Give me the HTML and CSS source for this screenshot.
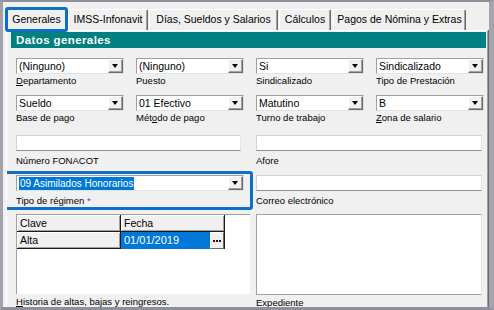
FILE: index.html
```html
<!DOCTYPE html>
<html lang="es">
<head>
<meta charset="utf-8">
<title>Datos generales</title>
<link rel="stylesheet" href="styles.css">
</head>
<body>
<div class="frame">
  <div class="tabs">
    <div class="tab tab-generales active">Generales<span class="ring ring-tab"></span></div>
    <div class="tab tab-imss">IMSS-Infonavit</div>
    <div class="tab tab-dias">Días, Sueldos y Salarios</div>
    <div class="tab tab-calculos">Cálculos</div>
    <div class="tab tab-pagos">Pagos de Nómina y Extras</div>
  </div>
  <div class="panel">
    <div class="section-title">Datos generales</div>

    <div class="combo-grid">
      <div class="field">
        <div class="combo"><span class="value">(Ninguno)</span><span class="btn"><i class="arrow"></i></span></div>
        <div class="label"><u>D</u>epartamento</div>
      </div>
      <div class="field">
        <div class="combo"><span class="value">(Ninguno)</span><span class="btn"><i class="arrow"></i></span></div>
        <div class="label">Puesto</div>
      </div>
      <div class="field">
        <div class="combo"><span class="value">Si</span><span class="btn"><i class="arrow"></i></span></div>
        <div class="label">Sindicalizado</div>
      </div>
      <div class="field">
        <div class="combo"><span class="value">Sindicalizado</span><span class="btn"><i class="arrow"></i></span></div>
        <div class="label">Tipo de Prestación</div>
      </div>
      <div class="field">
        <div class="combo"><span class="value">Sueldo</span><span class="btn"><i class="arrow"></i></span></div>
        <div class="label">Base de pago</div>
      </div>
      <div class="field">
        <div class="combo"><span class="value">01 Efectivo</span><span class="btn"><i class="arrow"></i></span></div>
        <div class="label">Mét<u>o</u>do de pago</div>
      </div>
      <div class="field">
        <div class="combo"><span class="value">Matutino</span><span class="btn"><i class="arrow"></i></span></div>
        <div class="label">Turno de trabajo</div>
      </div>
      <div class="field">
        <div class="combo"><span class="value">B</span><span class="btn"><i class="arrow"></i></span></div>
        <div class="label"><u>Z</u>ona de salario</div>
      </div>
    </div>

    <div class="pair row-text">
      <div class="field">
        <div class="edit edit-left"></div>
        <div class="label gap">Número FONACOT</div>
      </div>
      <div class="field">
        <div class="edit"></div>
        <div class="label gap">Afore</div>
      </div>
    </div>

    <div class="pair row-regimen">
      <div class="field highlighted">
        <div class="combo"><span class="value"><span class="selected">09 Asimilados Honorarios</span></span><span class="btn"><i class="arrow"></i></span></div>
        <div class="label gap">Tipo de régimen <span class="req">*</span></div>
        <span class="ring ring-field"></span>
      </div>
      <div class="field">
        <div class="edit"></div>
        <div class="label gap">Correo electrónico</div>
      </div>
    </div>

    <div class="pair row-bottom">
      <div class="field">
        <div class="sgrid">
          <div class="cell fixed">Clave</div>
          <div class="cell fixed">Fecha</div>
          <div class="cell fixed">Alta</div>
          <div class="cell data">01/01/2019<span class="ellipsis"><svg width="8" height="2" viewBox="0 0 8 2"><rect x="0" y="0" width="2" height="2"/><rect x="3" y="0" width="2" height="2"/><rect x="6" y="0" width="2" height="2"/></svg></span></div>
        </div>
        <div class="label small-gap"><u>H</u>istoria de altas, bajas y reingresos.</div>
      </div>
      <div class="field">
        <div class="memo"></div>
        <div class="label small-gap">E<u>x</u>pediente</div>
      </div>
    </div>
  </div>
</div>
</body>
</html>
```

FILE: styles.css
```css
* { box-sizing: border-box; }

html, body {
  margin: 0;
  padding: 0;
  background: #f0f0f0;
}

body {
  font-family: "Liberation Sans", Arial, sans-serif;
  color: #000;
  width: 494px;
  height: 310px;
  overflow: hidden;
}

.frame {
  width: 494px;
  height: 310px;
  display: flex;
  flex-direction: column;
  background: #f0f0f0;
  border-top: 2px solid #8f8f9c;
  border-left: 3px solid #a2a2ac;
  border-right: 5px solid #a4a4ae;
  border-bottom: 3px solid #8f8f9c;
  overflow: hidden;
}

/* ---------- tabs ---------- */
.tabs {
  display: flex;
  align-items: flex-end;
  height: 23px;
  margin-top: 5px;
  padding-left: 3px;
  flex: none;
}

.tab {
  position: relative;
  height: 21px;
  margin-right: 1px;
  font-size: 10.5px;
  line-height: 19px;
  text-align: center;
  white-space: nowrap;
  background: #f0f0f0;
  border-top: 1px solid #fff;
  border-left: 1px solid #fff;
  border-right: 1px solid #696969;
  border-radius: 2px 2px 0 0;
  box-shadow: inset -1px 0 #a0a0a0;
}

.tab.active {
  height: 23px;
  line-height: 21px;
  z-index: 2;
  margin-bottom: -1px;
}

.tab-generales { width: 61px; }
.tab-imss { width: 80px; }
.tab-dias { width: 129px; }
.tab-calculos { width: 52px; margin-right: 2px; }
.tab-pagos { width: 133px; }

.ring {
  position: absolute;
  border: 3px solid #0f6fc6;
  border-radius: 3px;
  pointer-events: none;
}

.ring-tab {
  top: -2px;
  left: -2px;
  right: -2px;
  bottom: -1px;
}

/* ---------- panel ---------- */
.panel {
  flex: 1;
  margin-left: 3px;
  margin-right: 1px;
  border-top: 1px solid #fff;
  border-left: 1px solid #fff;
  border-right: 1px solid #a0a0a0;
  box-shadow: 1px 0 #696969;
  padding: 1px 1px 0 4px;
  display: flex;
  flex-direction: column;
  overflow: hidden;
}

.section-title {
  height: 16px;
  background: #008080;
  color: #fff;
  font-weight: bold;
  font-size: 11.5px;
  letter-spacing: 0.4px;
  line-height: 16px;
  padding-left: 5px;
  flex: none;
}

.combo-grid {
  display: grid;
  grid-template-columns: repeat(4, 108px);
  column-gap: 12px;
  row-gap: 8px;
  margin-top: 10px;
  padding-left: 5px;
}

.field {
  position: relative;
  display: flex;
  flex-direction: column;
}

.label {
  font-size: 9.5px;
  line-height: 13px;
  height: 13px;
  white-space: nowrap;
}

.label.gap { margin-top: 3px; }
.label.small-gap { margin-top: 2px; line-height: 11px; height: 11px; }

.req { color: #6b3aa6; }

/* ---------- combobox ---------- */
.combo {
  display: flex;
  height: 16px;
  background: #fff;
  border: 1px solid;
  border-color: #a0a0a0 #e3e3e3 #e3e3e3 #a0a0a0;
}

.combo .value {
  flex: 1;
  font-size: 10.5px;
  line-height: 14px;
  padding-left: 2px;
  white-space: nowrap;
  overflow: hidden;
}

.combo .btn {
  width: 15px;
  height: 14px;
  flex: none;
  display: flex;
  align-items: center;
  justify-content: center;
  background: #f0f0f0;
  border: 1px solid;
  border-color: #fff #696969 #696969 #fff;
  box-shadow: inset -1px -1px #a0a0a0;
}

.arrow {
  display: block;
  width: 0;
  height: 0;
  border-left: 3.5px solid transparent;
  border-right: 3.5px solid transparent;
  border-top: 4px solid #000;
  margin-left: -1px;
}

/* ---------- two-column rows ---------- */
.pair {
  display: grid;
  grid-template-columns: 228px 226px;
  column-gap: 12px;
  padding-left: 5px;
}

.row-text { margin-top: 11px; }
.row-regimen { margin-top: 8px; }
.row-bottom { margin-top: 7px; }

.edit {
  height: 16px;
  background: #fff;
  border: 1px solid #d2d2d2;
  border-bottom-color: #8e8e8e;
  border-right-color: #e6e6e6;
}

.edit-left { width: 225px; }

.selected {
  display: inline-block;
  background: #0078d7;
  color: #fff;
  font-size: 10px;
  line-height: 14px;
  padding: 0 1px;
}

.ring-field {
  top: -4px;
  left: -12px;
  right: -9px;
  bottom: -3px;
}

/* ---------- string grid ---------- */
.sgrid {
  width: 234px;
  height: 80px;
  background: #fff;
  border-top: 1px solid #a0a0a0;
  border-left: 1px solid #a0a0a0;
  display: grid;
  grid-template-columns: 104px 104px;
  grid-auto-rows: 17px;
  align-content: start;
}

.cell {
  position: relative;
  font-size: 10.5px;
  line-height: 16px;
  padding-left: 3px;
  border-right: 1px solid #1a1a1a;
  border-bottom: 1px solid #1a1a1a;
  white-space: nowrap;
}

.cell.fixed {
  background: #f0f0f0;
  box-shadow: inset 1px 1px #fff, inset -1px -1px #a0a0a0;
}

.cell.data {
  background: #0078d7;
  color: #fff;
  font-size: 11px;
  border-bottom: none;
}

.ellipsis {
  position: absolute;
  right: 0;
  top: 0;
  width: 14px;
  height: 17px;
  display: flex;
  align-items: center;
  justify-content: center;
  background: #f0f0f0;
  border: 1px solid;
  border-color: #fff #696969 #696969 #fff;
}

.ellipsis svg {
  display: block;
  fill: #2a1010;
}

.memo {
  width: 226px;
  height: 81px;
  background: #fff;
  border: 1px solid #a0a0a0;
  border-right-color: #e6e6e6;
}
```
